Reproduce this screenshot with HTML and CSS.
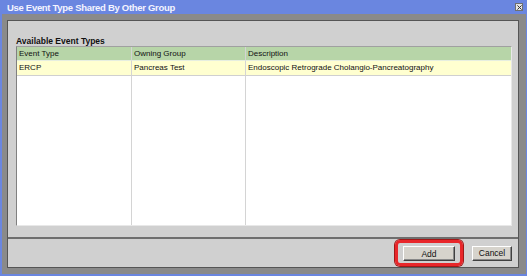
FILE: index.html
```html
<html>
    <head>
        <link rel="stylesheet" href="styles.css">
    </head>
    <body>
        <div class="window">
            <div class="titlebar">
                <span class="title">Use Event Type Shared By Other Group</span>
                <span class="close">
                    <svg width="6" height="6" viewBox="0 0 6 6"><path d="M0.5 0.5 L5.5 5.5 M5.5 0.5 L0.5 5.5" stroke="#333" stroke-width="1.2"/></svg>
                </span>
            </div>
            <div class="frame">
                <div class="panel">
                    <div class="content">
                        <div class="caption">Available Event Types</div>
                        <div class="list">
                            <div class="cell head">Event Type</div>
                            <div class="cell head">Owning Group</div>
                            <div class="cell head last">Description</div>
                            <div class="cell row">ERCP</div>
                            <div class="cell row">Pancreas Test</div>
                            <div class="cell row last">Endoscopic Retrograde Cholangio-Pancreatography</div>
                            <div class="cell fill"></div>
                            <div class="cell fill"></div>
                            <div class="cell fill last"></div>
                        </div>
                    </div>
                    <div class="buttons">
                        <span class="highlight"><button class="btn add">Add</button></span>
                        <button class="btn cancel">Cancel</button>
                    </div>
                </div>
            </div>
        </div>
    </body>
</html>
```

FILE: styles.css
```css
body{
    margin: 0;
}
.window{
    width: 527px;
    height: 276px;
    box-sizing: border-box;
    background-color: #8a8a8a;
    border-left: 2px solid #6a86e0;
    border-right: 1px solid #6a86e0;
    border-bottom: 2px solid #6a86e0;
    display: flex;
    flex-direction: column;
    font-family: "Liberation Sans", Arial, sans-serif;
}
.titlebar{
    height: 14px;
    flex: none;
    background-color: #6a86e0;
    display: flex;
    align-items: center;
    justify-content: space-between;
    padding: 0 3px 0 5px;
}
.title{
    color: #f4f4ff;
    font-weight: bold;
    font-size: 9.5px;
    letter-spacing: -0.3px;
}
.close{
    width: 8px;
    height: 8px;
    box-sizing: border-box;
    border: 1px solid #707070;
    background-color: #e4e4e4;
    display: flex;
    align-items: center;
    justify-content: center;
}
.close svg{
    display: block;
    width: 5px;
    height: 5px;
}
.frame{
    flex: 1;
    padding: 6px 7px 6px 5px;
    display: flex;
}
.panel{
    flex: 1;
    border: 1px solid #555555;
    background-color: #d0d0d0;
    display: flex;
    flex-direction: column;
}
.content{
    flex: 1;
    padding: 16px 6px 0 8px;
}
.caption{
    font-size: 8.5px;
    font-weight: bold;
    line-height: 9px;
    color: #111;
}
.list{
    height: 180px;
    box-sizing: border-box;
    display: grid;
    grid-template-columns: 115px 114px 1fr;
    grid-template-rows: 14px 15px 1fr;
    border-left: 1px solid #808080;
    border-top: 1px solid #a0a0a0;
    border-right: 1px solid #e8e8e8;
    border-bottom: 1px solid #e8e8e8;
    background-color: white;
}
.cell{
    font-size: 8px;
    color: #111;
    padding-left: 2px;
    border-right: 1px solid #d4d4d4;
    white-space: nowrap;
    overflow: hidden;
    line-height: 13px;
}
.cell.last{
    border-right: none;
}
.head{
    background-color: #b7d5a8;
    border-bottom: 1px solid #e6eee0;
}
.row{
    background-color: #ffffd0;
    border-bottom: 1px solid #d0d0d0;
}
.fill{
    background-color: white;
}
.buttons{
    height: 28px;
    flex: none;
    border-top: 2px solid #6e6e6e;
    display: flex;
    justify-content: flex-end;
    align-items: center;
    gap: 9px;
    padding-right: 6px;
}
.highlight{
    display: flex;
    padding: 3px 5px 2px 5px;
    border: 3px solid #e8262a;
    border-radius: 5px;
    box-shadow: 0 0 0 1px #a01818;
}
.btn{
    height: 15px;
    padding: 0;
    font-family: "Liberation Sans", Arial, sans-serif;
    font-size: 8.5px;
    color: #111;
    background-color: #d6d3cc;
    border: 1px solid;
    border-color: #ffffff #404040 #404040 #ffffff;
    box-shadow: inset -1px -1px #888888;
}
.add{
    width: 52px;
}
.cancel{
    width: 40px;
}
```
